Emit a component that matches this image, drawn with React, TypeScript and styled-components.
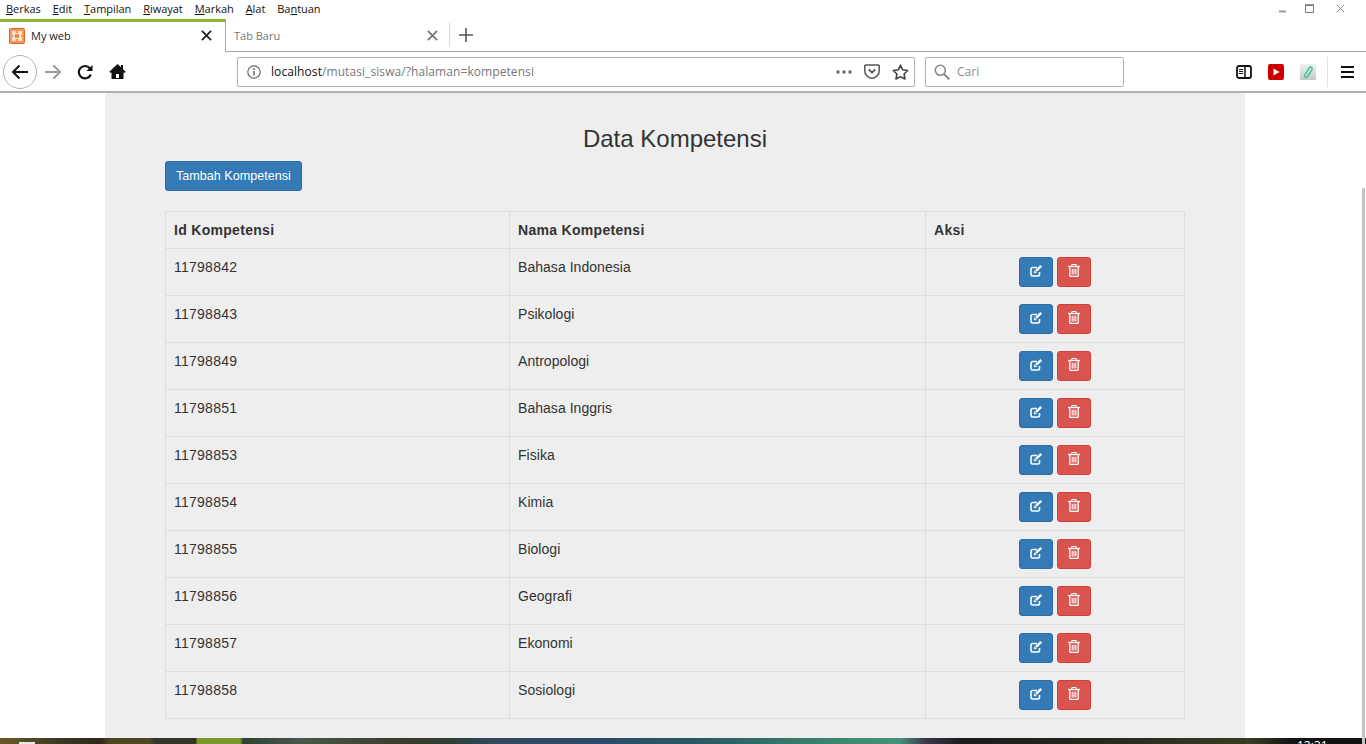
import React from "react";
import styled, { createGlobalStyle } from "styled-components";

const Global = createGlobalStyle`
  html, body { margin: 0; padding: 0; height: 100%; background: #fff; overflow: hidden; }
  #root { height: 100%; }
  * { box-sizing: border-box; }
`;

const Screen = styled.div`
  position: relative;
  width: 1366px;
  height: 744px;
  display: flex;
  flex-direction: column;
  overflow: hidden;
  background: #fff;
`;

const MenuBar = styled.div`
  height: 19px;
  flex: none;
  display: flex;
  gap: 12px;
  padding: 0 6px 2px;
  align-items: center;
  font: 11px/17px "Open Sans", "Noto Sans", sans-serif;
  color: #111;
  letter-spacing: -0.04px;
  u { text-decoration: underline; text-underline-offset: 1px; }
`;

const WindowControls = styled.div`
  margin-left: auto;
  display: flex;
  align-items: center;
  margin-right: 5px;
`;

const WindowButton = styled.span<{ $width: number }>`
  width: ${(p) => p.$width}px;
  height: 14px;
  display: flex;
  align-items: center;
  justify-content: center;
`;

const TabStrip = styled.div`
  height: 33px;
  flex: none;
  display: flex;
  border-bottom: 1px solid #a8a8a8;
`;

const TabBase = styled.div`
  display: flex;
  align-items: center;
  font: 11px "Open Sans", "Noto Sans", sans-serif;
`;

const ActiveTab = styled(TabBase)`
  width: 226px;
  height: 33px;
  padding: 0 13px 3px 9px;
  background: #fff;
  border-top: 3px solid #8fb53a;
  border-right: 1px solid #a8a8a8;
  color: #222;
  gap: 6px;
  position: relative;
  z-index: 1;
`;

const InactiveTab = styled(TabBase)`
  width: 223px;
  padding: 0 11px 0 8px;
  color: #777;
`;

const TabLabel = styled.span`
  flex: 1;
`;

const Divider = styled.span`
  width: 1px;
  height: 24px;
  background: #d8d8d8;
  align-self: center;
  flex: none;
`;

const NewTab = styled.span`
  width: 32px;
  display: flex;
  align-items: center;
  justify-content: center;
`;

const Toolbar = styled.div`
  height: 41px;
  flex: none;
  display: flex;
  align-items: center;
  padding-left: 3px;
  border-bottom: 2px solid #b0b0b0;
`;

const BackButton = styled.div`
  width: 34px;
  height: 34px;
  border: 1px solid #b4b4b4;
  border-radius: 50%;
  display: flex;
  align-items: center;
  justify-content: center;
  flex: none;
`;

const NavIcon = styled.div`
  width: 32px;
  height: 32px;
  display: flex;
  align-items: center;
  justify-content: center;
  flex: none;
`;

const Field = styled.div<{ $width: number }>`
  width: ${(p) => p.$width}px;
  height: 30px;
  flex: none;
  border: 1px solid #b2b2b2;
  border-radius: 2px;
  display: flex;
  align-items: center;
  font: 12px "Open Sans", "Noto Sans", sans-serif;
`;

const UrlField = styled(Field)`
  margin-left: 104px;
  padding: 0 5px 0 9px;
`;

const SearchField = styled(Field)`
  margin-left: 10px;
  padding-left: 8px;
  color: #888;
  gap: 7px;
`;

const UrlText = styled.span`
  margin-left: 10px;
  flex: 1;
  color: #777;
  letter-spacing: 0.08px;
  b { font-weight: 400; color: #111; }
`;

const UrlActions = styled.span`
  display: flex;
  align-items: center;
  gap: 12px;
`;

const ExtIcons = styled.div`
  margin-left: auto;
  display: flex;
  align-items: center;
`;

const ExtSlot = styled.span`
  width: 32px;
  display: flex;
  align-items: center;
  justify-content: center;
`;

const MenuButton = styled.span`
  width: 39px;
  height: 30px;
  margin-left: 3px;
  border-left: 1px solid #e2e2e2;
  display: flex;
  align-items: center;
  justify-content: center;
`;

const PageArea = styled.div`
  flex: 1;
  min-height: 0;
  overflow: hidden;
  padding-left: 105px;
`;

const Panel = styled.main`
  width: 1140px;
  height: 100%;
  background: #eee;
  padding: 33px 60px 0;
  font: 14px/20px "Liberation Sans", Arial, sans-serif;
  color: #333;
`;

const Title = styled.h3`
  margin: 0 0 9px;
  font: 500 24px/26.4px "Liberation Sans", Arial, sans-serif;
  color: #333;
  text-align: center;
`;

const Button = styled.button<{ $danger?: boolean }>`
  display: inline-flex;
  align-items: center;
  justify-content: center;
  height: 30px;
  padding: 0 10px;
  border-radius: 3px;
  border: 1px solid ${(p) => (p.$danger ? "#d43f3a" : "#2e6da4")};
  background: ${(p) => (p.$danger ? "#d9534f" : "#337ab7")};
  color: #fff;
  font: 12.6px "Liberation Sans", Arial, sans-serif;
`;

const IconButton = styled(Button)`
  width: 34px;
  padding: 0 0 3px;
`;

const Table = styled.table`
  width: 1020px;
  margin-top: 20px;
  border-collapse: separate;
  border-spacing: 0;
  table-layout: fixed;
  border-top: 1px solid #ddd;
  border-left: 1px solid #ddd;
  th, td {
    border-right: 1px solid #ddd;
    border-bottom: 1px solid #ddd;
    padding: 8px;
    vertical-align: top;
    text-align: left;
    line-height: 20px;
  }
  th { font-weight: 700; letter-spacing: 0.3px; }
`;

const IdCell = styled.td`
  letter-spacing: 0.25px;
`;

const NameCell = styled.td`
  letter-spacing: 0.04px;
`;

const ActionGroup = styled.div`
  display: flex;
  justify-content: center;
  gap: 4px;
`;

const ScrollThumb = styled.div`
  position: absolute;
  right: 1px;
  top: 188px;
  width: 3px;
  height: 556px;
  background: #c4c4c4;
`;

const Taskbar = styled.div`
  position: relative;
  height: 6px;
  flex: none;
  overflow: hidden;
  font: 12px "Open Sans", sans-serif;
  background: linear-gradient(
    90deg,
    #6a5a28 0,
    #3b3a24 58px,
    #2e2a1c 100px,
    #4d4520 110px,
    #4d4824 150px,
    #34362a 155px,
    #34362a 196px,
    #7c9a2c 197px,
    #7c9a2c 240px,
    #2f4038 243px,
    #48584a 300px,
    #3b3c2c 400px,
    #2c4034 450px,
    #344a60 500px,
    #2c4a68 600px,
    #2a5a60 700px,
    #3f8a70 850px,
    #48907a 900px,
    #3a3a48 925px,
    #1c1c1e 960px,
    #26281c 1100px,
    #3a3c24 1250px,
    #141414 1290px,
    #111 1366px
  );
`;

const Clock = styled.span`
  position: absolute;
  left: 1297px;
  top: 1px;
  color: #fff;
  line-height: 14px;
`;

const StartMark = styled.span`
  position: absolute;
  left: 19px;
  top: 4px;
  width: 16px;
  height: 4px;
  background: #e8e8e8;
`;

const rows: [string, string][] = [
  ["11798842", "Bahasa Indonesia"],
  ["11798843", "Psikologi"],
  ["11798849", "Antropologi"],
  ["11798851", "Bahasa Inggris"],
  ["11798853", "Fisika"],
  ["11798854", "Kimia"],
  ["11798855", "Biologi"],
  ["11798856", "Geografi"],
  ["11798857", "Ekonomi"],
  ["11798858", "Sosiologi"],
];

const menus: [string, string, string][] = [
  ["", "B", "erkas"],
  ["", "E", "dit"],
  ["", "T", "ampilan"],
  ["", "R", "iwayat"],
  ["", "M", "arkah"],
  ["", "A", "lat"],
  ["Ba", "n", "tuan"],
];

const CloseX = ({ size, color, w = 2 }: { size: number; color: string; w?: number }) => (
  <svg width={size} height={size} viewBox="0 0 12 12" fill="none" stroke={color} strokeWidth={w}>
    <path d="M1 1l10 10M11 1L1 11" />
  </svg>
);

const EditGlyph = () => (
  <svg width="13" height="13" viewBox="0 0 13 13" fill="none" stroke="#fff">
    <path d="M9.500 8v2.300A1.700 1.700 0 0 1 7.800 12H2.700A1.700 1.700 0 0 1 1 10.300V5.200A1.700 1.700 0 0 1 2.700 3.500H7" strokeWidth="1.600" />
    <path d="M11.200 1.800L6 7" strokeWidth="2.400" />
    <path d="M4.400 6.700l-.3 2.300 2.300-.3z" fill="#fff" strokeWidth="0.500" />
  </svg>
);

const TrashGlyph = () => (
  <svg width="12" height="13" viewBox="0 0 12 13" fill="none" stroke="#fff">
    <path d="M0 2.500h12" strokeWidth="1.300" />
    <path d="M3.800 2.500V1.300q0-.8.8-.8h2.800q.8 0 .8.800v1.200" strokeWidth="1.100" />
    <path d="M1.800 2.500v9q0 1 1 1h6.400q1 0 1-1v-9" strokeWidth="1.300" />
    <path d="M4.200 4.800v5.700M6 4.800v5.700M7.800 4.800v5.700" strokeWidth="1.100" />
  </svg>
);

export default function App() {
  return (
    <Screen>
      <Global />
      <MenuBar>
        {menus.map(([a, b, c]) => (
          <span key={b + c}>
            {a}
            <u>{b}</u>
            {c}
          </span>
        ))}
        <WindowControls>
          <WindowButton $width={25}>
            <svg width="8" height="8" viewBox="0 0 8 8"><path d="M0 6.500h7" stroke="#999" strokeWidth="2" /></svg>
          </WindowButton>
          <WindowButton $width={30}>
            <svg width="10" height="10" viewBox="0 0 10 10" fill="none"><path d="M.5 1.500h8v7h-8z" stroke="#777" /><path d="M0 1h9" stroke="#777" strokeWidth="1.500" /></svg>
          </WindowButton>
          <WindowButton $width={30}>
            <CloseX size={9} color="#777" w={1.100} />
          </WindowButton>
        </WindowControls>
      </MenuBar>

      <TabStrip>
        <ActiveTab>
          <svg width="16" height="16" viewBox="0 0 16 16">
            <rect width="16" height="16" rx="2" fill="#d96c28" />
            <rect x="1" y="1" width="14" height="14" rx="1" fill="#ee9a5e" />
            <path d="M3 3h3.500v2h3V3H13v3.500l-1.500 1.500L13 9.500V13H9.500v-2h-3v2H3V9.500L4.500 8 3 6.500z" fill="#fbe6d4" />
            <rect x="5.800" y="6.300" width="4.400" height="3.400" fill="#e8803c" />
          </svg>
          <TabLabel>My web</TabLabel>
          <CloseX size={11} color="#222" />
        </ActiveTab>
        <InactiveTab>
          <TabLabel>Tab Baru</TabLabel>
          <CloseX size={11} color="#777" />
        </InactiveTab>
        <Divider />
        <NewTab>
          <svg width="14" height="14" viewBox="0 0 14 14"><path d="M7 0v14M0 7h14" stroke="#555" strokeWidth="1.600" /></svg>
        </NewTab>
      </TabStrip>

      <Toolbar>
        <BackButton>
          <svg width="18" height="16" viewBox="0 0 18 16" fill="none" stroke="#111" strokeWidth="2"><path d="M17 8H2M8.500 1.500L2 8l6.500 6.500" /></svg>
        </BackButton>
        <NavIcon>
          <svg width="18" height="16" viewBox="0 0 18 16" fill="none" stroke="#999" strokeWidth="2"><path d="M1 8h15M9.500 1.500L16 8l-6.500 6.500" /></svg>
        </NavIcon>
        <NavIcon>
          <svg width="16" height="16" viewBox="0 0 16 16" fill="none" stroke="#111" strokeWidth="2.200"><path d="M13.800 10.500A6.200 6.200 0 1 1 12.800 4.200" /><path d="M15.500 1v6H9.500z" fill="#111" stroke="none" /></svg>
        </NavIcon>
        <NavIcon>
          <svg width="17" height="17" viewBox="0 0 17 17"><path d="M8.500 1L.3 8.800l1.300 1.300.9-.8v6.700h12V9.300l.9.800 1.300-1.300-2.700-2.600V2h-2v2.300z" fill="#111" /><path d="M7 11h3v4H7z" fill="#fff" /></svg>
        </NavIcon>
        <UrlField $width={678}>
          <svg width="14" height="14" viewBox="0 0 14 14" fill="none"><circle cx="7" cy="7" r="6.200" stroke="#666" strokeWidth="1.200" /><path d="M7 6v4.500" stroke="#666" strokeWidth="1.500" /><circle cx="7" cy="4" r="1" fill="#666" /></svg>
          <UrlText><b>localhost</b>/mutasi_siswa/?halaman=kompetensi</UrlText>
          <UrlActions>
            <svg width="16" height="4" viewBox="0 0 16 4" fill="#666"><circle cx="2" cy="2" r="1.700" /><circle cx="8" cy="2" r="1.700" /><circle cx="14" cy="2" r="1.700" /></svg>
            <svg width="16" height="15" viewBox="0 0 16 15" fill="none" stroke="#555" strokeWidth="1.500"><path d="M1.500 1h13a.7.7 0 0 1 .7.7V7a7.200 7.200 0 0 1-14.400 0V1.700a.7.7 0 0 1 .7-.7z" /><path d="M4.800 5.500L8 8.600l3.200-3.100" strokeWidth="1.800" /></svg>
            <svg width="17" height="16" viewBox="0 0 17 16" fill="none" stroke="#444" strokeWidth="1.600" strokeLinejoin="round"><path d="M8.500 1.200l2.200 4.600 5 .7-3.600 3.500.9 5-4.500-2.400L4 15l.9-5L1.300 6.500l5-.7z" /></svg>
          </UrlActions>
        </UrlField>
        <SearchField $width={199}>
          <svg width="16" height="16" viewBox="0 0 16 16" fill="none" stroke="#888" strokeWidth="1.600"><circle cx="6.300" cy="6.300" r="5" /><path d="M10 10l5.300 5.300" strokeWidth="2" /></svg>
          <span>Cari</span>
        </SearchField>
        <ExtIcons>
          <ExtSlot>
            <svg width="16" height="14" viewBox="0 0 16 14" fill="none"><rect x="1" y="1" width="14" height="12" rx="2" stroke="#111" strokeWidth="1.800" /><path d="M9 1v12" stroke="#111" strokeWidth="1.500" /><path d="M3 4.500h4M3 6.500h4M3 8.500h4" stroke="#111" /></svg>
          </ExtSlot>
          <ExtSlot>
            <svg width="16" height="16" viewBox="0 0 16 16"><rect width="16" height="16" rx="2" fill="#cc0000" /><path d="M5.500 4.500l6 3.500-6 3.500z" fill="#fff" /></svg>
          </ExtSlot>
          <ExtSlot>
            <svg width="16" height="16" viewBox="0 0 16 16" fill="none"><defs><linearGradient id="clipBg" x1="0" y1="0" x2="0" y2="1"><stop offset="0" stopColor="#eef2ee" /><stop offset="1" stopColor="#c4cac8" /></linearGradient></defs><rect width="16" height="16" rx="1.500" fill="url(#clipBg)" /><path d="M11.800 6L7.300 12.800c-1 1.500-3.500.2-2.500-1.600l4.400-7.300c1-1.700 3.700-.5 2.800 1.400l-4.200 7" stroke="#3fbfa2" strokeWidth="1.400" /></svg>
          </ExtSlot>
          <MenuButton>
            <svg width="13" height="12" viewBox="0 0 13 12"><path d="M0 1h13M0 6h13M0 11h13" stroke="#111" strokeWidth="1.800" /></svg>
          </MenuButton>
        </ExtIcons>
      </Toolbar>

      <PageArea>
        <Panel>
          <Title>Data Kompetensi</Title>
          <Button>Tambah Kompetensi</Button>
          <Table>
            <colgroup>
              <col style={{ width: 344 }} />
              <col style={{ width: 416 }} />
              <col style={{ width: 259 }} />
            </colgroup>
            <thead>
              <tr>
                <th>Id Kompetensi</th>
                <th>Nama Kompetensi</th>
                <th>Aksi</th>
              </tr>
            </thead>
            <tbody>
              {rows.map(([id, name]) => (
                <tr key={id}>
                  <IdCell>{id}</IdCell>
                  <NameCell>{name}</NameCell>
                  <td>
                    <ActionGroup>
                      <IconButton><EditGlyph /></IconButton>
                      <IconButton $danger><TrashGlyph /></IconButton>
                    </ActionGroup>
                  </td>
                </tr>
              ))}
            </tbody>
          </Table>
        </Panel>
      </PageArea>

      <Taskbar>
        <StartMark />
        <Clock>12:31</Clock>
      </Taskbar>
      <ScrollThumb />
    </Screen>
  );
}
